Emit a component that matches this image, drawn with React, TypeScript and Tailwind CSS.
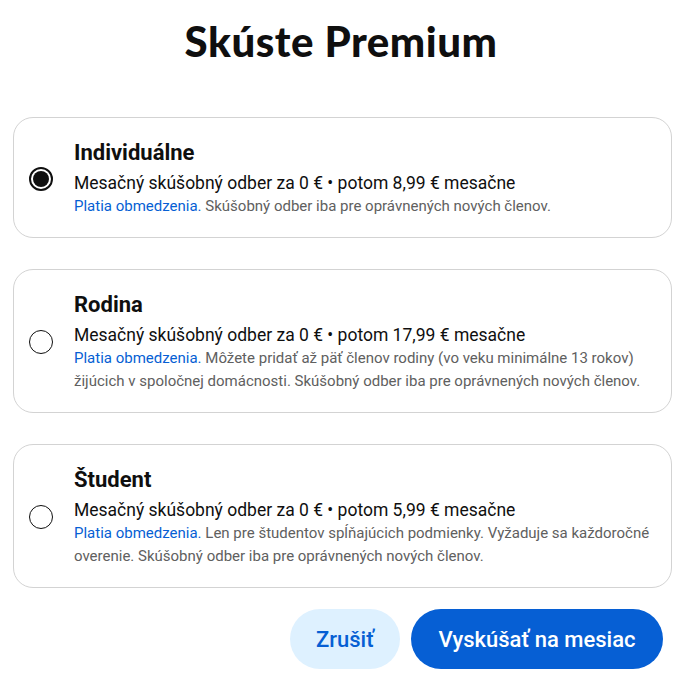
import React, { useState } from "react";

type Plan = {
  id: string;
  name: string;
  price: string;
  note: string;
};

const plans: Plan[] = [
  {
    id: "individual",
    name: "Individuálne",
    price: "Mesačný skúšobný odber za 0 € • potom 8,99 € mesačne",
    note: "Skúšobný odber iba pre oprávnených nových členov.",
  },
  {
    id: "family",
    name: "Rodina",
    price: "Mesačný skúšobný odber za 0 € • potom 17,99 € mesačne",
    note: "Môžete pridať až päť členov rodiny (vo veku minimálne 13 rokov) žijúcich v spoločnej domácnosti. Skúšobný odber iba pre oprávnených nových členov.",
  },
  {
    id: "student",
    name: "Študent",
    price: "Mesačný skúšobný odber za 0 € • potom 5,99 € mesačne",
    note: "Len pre študentov spĺňajúcich podmienky. Vyžaduje sa každoročné overenie. Skúšobný odber iba pre oprávnených nových členov.",
  },
];

const Radio = ({ checked }: { checked: boolean }) =>
  checked ? (
    <span className="flex h-6 w-6 shrink-0 items-center justify-center rounded-full border-2 border-[#0f0f0f]">
      <span className="h-4 w-4 rounded-full bg-[#0f0f0f]" />
    </span>
  ) : (
    <span className="h-6 w-6 shrink-0 rounded-full border-[1.5px] border-[#0f0f0f]" />
  );

export default function App() {
  const [selected, setSelected] = useState("individual");

  return (
    <div className="min-h-screen bg-white font-['Roboto',sans-serif] text-[#0f0f0f]">
      <h1 className="pt-[16px] text-center font-['Lato',sans-serif] text-[42px] font-black leading-[50px] tracking-[0.5px]">
        Skúste Premium
      </h1>

      <div className="ml-[13px] mr-[10px] mt-[51px] flex flex-col gap-[31px]">
        {plans.map((plan) => (
          <button
            key={plan.id}
            type="button"
            onClick={() => setSelected(plan.id)}
            className="flex items-center gap-[21px] rounded-[20px] border border-[#d3d3d3] pb-[19px] pl-[15px] pr-[18px] pt-[21px] text-left"
          >
            <Radio checked={selected === plan.id} />
            <div className="flex flex-col">
              <span className="text-[22px] font-bold leading-[28px]">
                {plan.name}
              </span>
              <span className="mt-[4px] text-[17.5px] leading-[24px]">
                {plan.price}
              </span>
              <p className="text-[15px] leading-[23px] text-[#606060]">
                <span className="text-[#065fd4]">Platia obmedzenia.</span>{" "}
                {plan.note}
              </p>
            </div>
          </button>
        ))}
      </div>

      <div className="mr-[19px] mt-[21px] flex justify-end gap-[11px]">
        <button
          type="button"
          className="h-[60px] rounded-full bg-[#def1ff] px-[26px] text-[22px] font-medium text-[#065fd4]"
        >
          Zrušiť
        </button>
        <button
          type="button"
          className="h-[60px] rounded-full bg-[#065fd4] px-[27.5px] text-[22px] font-medium text-white"
        >
          Vyskúšať na mesiac
        </button>
      </div>
    </div>
  );
}
